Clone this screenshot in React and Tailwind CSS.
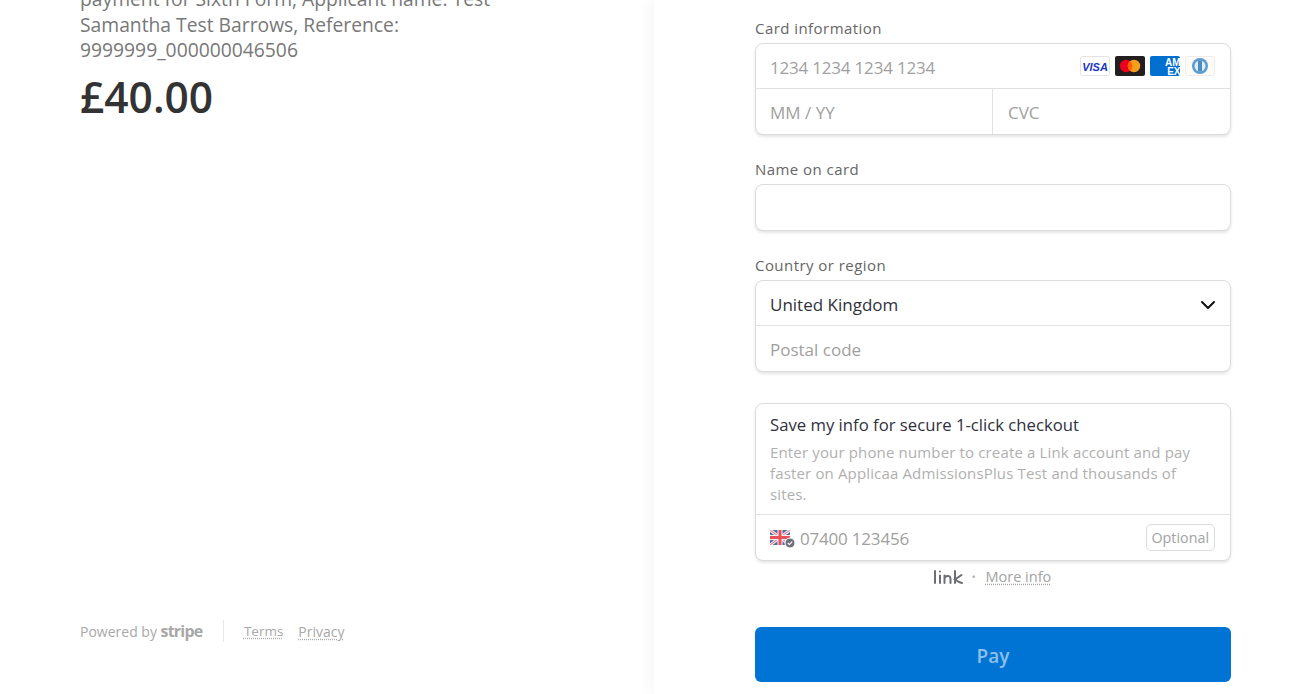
function Visa() {
  return <svg width="30" height="20" viewBox="0 0 30 20"><rect x=".5" y=".5" width="29" height="19" rx="2" fill="#fff" stroke="#e3e3e3"/><text x="15" y="14.500" textAnchor="middle" fontFamily="Liberation Sans, sans-serif" fontSize="11" fontWeight="700" fontStyle="italic" fill="#1a35c4">VISA</text></svg>;
}
function MC() {
  return <svg width="30" height="20" viewBox="0 0 30 20"><rect width="30" height="20" rx="2" fill="#231f20"/><circle cx="11" cy="10" r="6.200" fill="#eb001b"/><circle cx="19" cy="10" r="6.200" fill="#f79e1b"/><path d="M15 5.100a6.200 6.200 0 0 1 0 9.800a6.200 6.200 0 0 1 0-9.800z" fill="#ff5f00"/></svg>;
}
function Amex() {
  return <svg width="30" height="20" viewBox="0 0 30 20"><rect width="30" height="20" rx="2" fill="#016fd0"/><text x="30.500" y="9.500" textAnchor="end" fontFamily="Liberation Sans, sans-serif" fontSize="10" fontWeight="700" fill="#fff">AM</text><text x="30.500" y="18.500" textAnchor="end" fontFamily="Liberation Sans, sans-serif" fontSize="10" fontWeight="700" fill="#fff">EX</text></svg>;
}
function Diners() {
  return <svg width="30" height="20" viewBox="0 0 30 20"><rect x=".5" y=".5" width="29" height="19" rx="2" fill="#fdfbfa" stroke="#f0ece8"/><circle cx="15" cy="10" r="8" fill="#5a9bd0"/><circle cx="15" cy="10" r="5.500" fill="#dfecf6"/><rect x="13" y="4.500" width="4" height="11" fill="#4a8cc4"/></svg>;
}
function Flag() {
  return <svg width="26" height="20" viewBox="0 0 26 20" className="shrink-0">
    <defs><clipPath id="fl"><rect x="0" y="2" width="20" height="15" rx="1.500"/></clipPath></defs>
    <g clipPath="url(#fl)">
      <rect x="0" y="2" width="20" height="15" fill="#5a6aa8"/>
      <path d="M0 2L20 17M20 2L0 17" stroke="#f3eeee" strokeWidth="3"/>
      <path d="M0 2L20 17M20 2L0 17" stroke="#e0606f" strokeWidth="1"/>
      <path d="M10 2V17M0 9.500H20" stroke="#f7f2f2" strokeWidth="5"/>
      <path d="M10 2V17M0 9.500H20" stroke="#e8505c" strokeWidth="3"/>
    </g>
    <circle cx="20" cy="15" r="5" fill="#6d6e78" stroke="#fff" strokeWidth="1"/>
    <path d="M17.800 15l1.600 1.600 2.800-3" fill="none" stroke="#fff" strokeWidth="1.200"/>
  </svg>;
}
function Label({ children }) {
  return <div className="text-[15px] leading-5 font-medium tracking-[0.45px] text-[#666666] mb-[5px]">{children}</div>;
}
const box = "rounded-[8px] border border-[#dcdcdc] shadow-[0_2px_3px_rgba(0,0,0,0.1)] bg-white";

export default function App() {
  return (
    <div className="h-[694px] w-[1307px] overflow-hidden flex bg-white font-['Open_Sans','Noto_Sans',sans-serif] text-[#30313d]">
      <aside className="w-[654px] shrink-0 pl-20 flex flex-col h-full">
        <p className="-mt-[14px] w-[425px] text-[19.300px] leading-[25.500px] font-medium text-[#787878]">payment for Sixth Form, Applicant name: Test Samantha Test Barrows, Reference: 9999999_000000046506</p>
        <div className="mt-[4px] text-[42.500px] leading-[60px] font-semibold text-[#333333]">£40.00</div>
        <footer className="mt-auto mb-[51px] flex items-center text-[14px] text-[#a8a8a8] h-6">
          <span>Powered by <b className="font-bold text-[#a8a8a8] text-[16px] tracking-[-0.8px]">stripe</b></span>
          <span className="w-px h-[22px] bg-[#e8e8e8] ml-[20.500px] mr-5" />
          <a className="text-[13.500px] underline decoration-dotted underline-offset-2 mr-[15px]">Terms</a>
          <a className="text-[14px] underline decoration-dotted underline-offset-2">Privacy</a>
        </footer>
      </aside>
      <main className="flex-1 pl-[101px] pr-[76px] shadow-[-6px_0_12px_rgba(0,0,0,0.03)] h-full">
        <div className="pt-[18px]">
          <Label>Card information</Label>
          <div className={box}>
            <div className="h-[45px] pl-[14px] pr-[15px] flex items-center justify-between border-b border-[#e2e2e2] text-[17px] text-[#9f9f9f]">
              <span className="pt-[3px] tracking-[-0.2px]">1234 1234 1234 1234</span>
              <span className="flex gap-[5px]"><Visa /><MC /><Amex /><Diners /></span>
            </div>
            <div className="h-[45px] flex text-[17px] text-[#9f9f9f]">
              <div className="w-1/2 pl-[14px] pt-[3px] flex items-center border-r border-[#e2e2e2]">MM / YY</div>
              <div className="w-1/2 pl-[15px] pt-[3px] flex items-center">CVC</div>
            </div>
          </div>
          <div className="mt-[24px]"><Label>Name on card</Label></div>
          <div className={box + " h-[47px]"} />
          <div className="mt-[24px]"><Label>Country or region</Label></div>
          <div className={box}>
            <div className="h-[45px] pl-[14px] pr-[14px] flex items-center justify-between border-b border-[#e2e2e2] text-[17px] text-[#30313d]">
              <span className="pt-[3px]">United Kingdom</span>
              <svg width="16" height="16" viewBox="0 0 16 16" fill="none" stroke="#111" strokeWidth="2" strokeLinecap="round" strokeLinejoin="round" className="mt-[3px]"><path d="M2 5l6 6 6-6"/></svg>
            </div>
            <div className="h-[45px] pl-[14px] pt-[3px] flex items-center text-[17px] text-[#9f9f9f]">Postal code</div>
          </div>
          <div className={box + " mt-[31px]"}>
            <div className="pl-[14px] pr-[30px] pt-[8px] pb-[9px] border-b border-[#e2e2e2]">
              <div className="text-[16.700px] leading-[26px] text-[#30313d]">Save my info for secure 1-click checkout</div>
              <div className="text-[15px] tracking-[0.15px] leading-[21px] text-[#b0b0b0] mt-[4px]">Enter your phone number to create a Link account and pay faster on Applicaa AdmissionsPlus Test and thousands of sites.</div>
            </div>
            <div className="h-[45px] pl-[14px] pr-[15px] flex items-center text-[17px] text-[#9f9f9f]">
              <Flag />
              <span className="ml-[4px] pt-[3px] tracking-[-0.2px]">07400 123456</span>
              <span className="ml-auto h-[27px] px-[5px] flex items-center rounded-[5px] border border-[#dcdcdc] text-[14.300px] text-[#a3a3a3]">Optional</span>
            </div>
          </div>
          <div className="mt-[4px] flex items-center justify-center text-[14.500px] text-[#a3a3a3] h-[24px]">
            <svg width="30" height="16" viewBox="0 0 30 16" fill="none" stroke="#6d6e78" strokeWidth="2" strokeLinecap="round" className="-ml-[2px]"><path d="M2 2v12M7 6.500v7.500M7 2.500v.1M11.500 14V6.500M11.500 10c0-3.500 6-4.500 6 0v4M22 2v12M28.500 6l-6.500 4.500 4 2.500 3 1"/></svg>
            <span className="ml-[9px] mr-[10px] text-[10px]">•</span>
            <a className="underline decoration-dotted underline-offset-2">More info</a>
          </div>
          <button className="mt-[38px] pt-[3px] h-[55px] w-full rounded-[6px] bg-[#0074d4] text-[19px] font-semibold text-[#8ec0ea] flex items-center justify-center">Pay</button>
        </div>
      </main>
    </div>
  );
}
